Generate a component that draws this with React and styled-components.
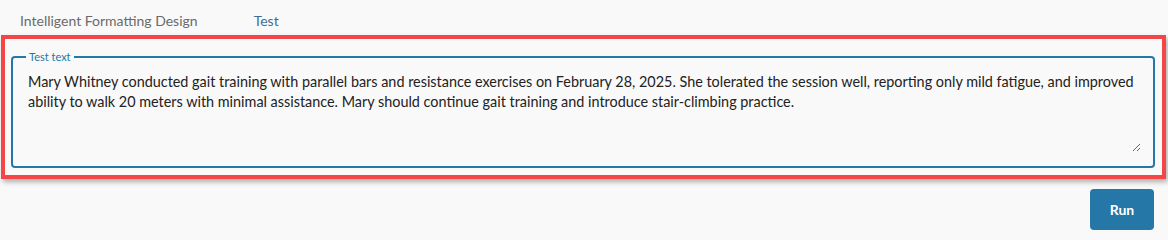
import React, { useState } from 'react'
import styled, { createGlobalStyle } from 'styled-components'

const GlobalStyle = createGlobalStyle`
  html, body {
    margin: 0;
    padding: 0;
    background: #f9f9f9;
    font-family: Lato, "Open Sans", Arial, sans-serif;
  }
`

const Page = styled.div`
  width: 1168px;
  height: 237px;
  box-sizing: border-box;
  padding: 0 2px 0 1px;
  background: #f9f9f9;
  display: flex;
  flex-direction: column;
`

const Tabs = styled.div`
  display: flex;
  align-items: center;
  height: 36px;
  padding-left: 19px;
  gap: 56px;
  margin-top: 2px;
  margin-bottom: -3px;
`

const Tab = styled.button`
  border: none;
  background: none;
  padding: 0;
  font-family: inherit;
  font-size: 14px;
  color: ${p => (p.$active ? '#3f6d92' : '#6a6a6a')};
  cursor: pointer;
`

const Highlight = styled.div`
  border: 4px solid #f44646;
  box-shadow: 2px 3px 5px rgba(0, 0, 0, 0.3);
  padding: 12px 7px 7px 6px;
  background: #f9f9f9;
`

const Field = styled.fieldset`
  margin: 0;
  border: 2px solid #2477a6;
  border-radius: 4px;
  padding: 0 12px 14px 15px;
  min-width: 0;
`

const Legend = styled.legend`
  font-size: 11px;
  color: #2477a6;
  padding: 0 3px;
  margin-left: -2px;
  line-height: 11px;
`

const TextBox = styled.textarea`
  display: block;
  width: 100%;
  box-sizing: border-box;
  height: 90px;
  border: none;
  outline: none;
  background: transparent;
  padding: 10px 0 0 0;
  margin: 0;
  font-family: inherit;
  font-size: 14.4px;
  line-height: 20px;
  color: #222;
  resize: vertical;
`

const Footer = styled.div`
  display: flex;
  justify-content: flex-end;
  padding: 10px 12px 0 0;
`

const RunButton = styled.button`
  width: 64px;
  height: 41px;
  border: none;
  border-radius: 4px;
  background: #2477a6;
  color: #fff;
  font-family: inherit;
  font-weight: 700;
  font-size: 14px;
  cursor: pointer;
`

const note =
  'Mary Whitney conducted gait training with parallel bars and resistance exercises on February 28, 2025. She tolerated the session well, reporting only mild fatigue, and improved ability to walk 20 meters with minimal assistance. Mary should continue gait training and introduce stair-climbing practice.'

export default function App () {
  const [text, setText] = useState(note)
  return (
    <Page>
      <GlobalStyle />
      <Tabs>
        <Tab>Intelligent Formatting Design</Tab>
        <Tab $active>Test</Tab>
      </Tabs>
      <Highlight>
        <Field>
          <Legend>Test text</Legend>
          <TextBox value={text} onChange={e => setText(e.target.value)} />
        </Field>
      </Highlight>
      <Footer>
        <RunButton>Run</RunButton>
      </Footer>
    </Page>
  )
}
